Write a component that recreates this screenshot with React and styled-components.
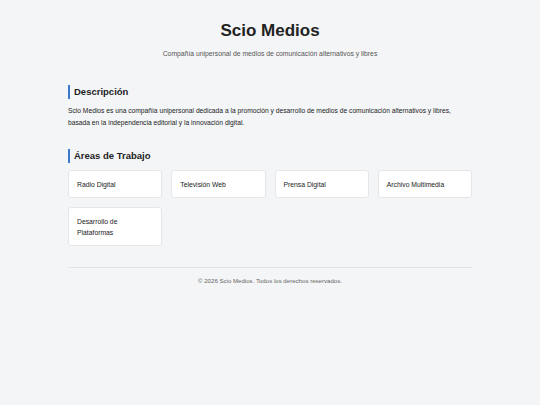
import React from "react";
import styled, { createGlobalStyle } from "styled-components";

const Global = createGlobalStyle`
  html, body { margin: 0; padding: 0; }
  body {
    background: #f4f5f7;
    font-family: "Liberation Sans", Arial, sans-serif;
    color: #222;
  }
`;

const Page = styled.div`
  max-width: 404px;
  margin: 0 auto;
  padding-top: 21px;
`;

const Header = styled.header`
  text-align: center;
`;

const Title = styled.h1`
  margin: 0;
  font-size: 17px;
  line-height: 20px;
  font-weight: 700;
  color: #222;
`;

const Subtitle = styled.p`
  margin: 7px 0 0;
  font-size: 6.8px;
  line-height: 11px;
  color: #555;
`;

const Section = styled.section`
  margin-top: ${(p) => p.$top}px;
`;

const Heading = styled.h2`
  margin: 0;
  font-size: 9.5px;
  line-height: 14px;
  font-weight: 700;
  color: #222;
  border-left: 2px solid #3a78c8;
  padding-left: 4px;
`;

const Paragraph = styled.p`
  margin: 6px 0 0;
  font-size: 6.7px;
  line-height: 12px;
  color: #222;
`;

const Grid = styled.div`
  margin-top: 7px;
  display: grid;
  grid-template-columns: repeat(4, 1fr);
  gap: 9px;
`;

const Card = styled.div`
  background: #fff;
  border: 1px solid #e4e6ea;
  border-radius: 3px;
  padding: 7.5px 8px;
  font-size: 6.8px;
  line-height: 11px;
  color: #222;
`;

const Footer = styled.footer`
  margin-top: 21px;
  border-top: 1px solid #e2e4e8;
  padding-top: 8px;
  text-align: center;
  font-size: 6.1px;
  line-height: 10px;
  color: #666;
`;

const areas = [
  "Radio Digital",
  "Televisión Web",
  "Prensa Digital",
  "Archivo Multimedia",
  "Desarrollo de Plataformas",
];

export default function App() {
  return (
    <>
      <Global />
      <Page>
        <Header>
          <Title>Scio Medios</Title>
          <Subtitle>
            Compañía unipersonal de medios de comunicación alternativos y libres
          </Subtitle>
        </Header>
        <Section $top={26}>
          <Heading>Descripción</Heading>
          <Paragraph>
            Scio Medios es una compañía unipersonal dedicada a la promoción y
            desarrollo de medios de comunicación alternativos y libres, basada en
            la independencia editorial y la innovación digital.
          </Paragraph>
        </Section>
        <Section $top={20}>
          <Heading>Áreas de Trabajo</Heading>
          <Grid>
            {areas.map((a) => (
              <Card key={a}>{a}</Card>
            ))}
          </Grid>
        </Section>
        <Footer>© 2026 Scio Medios. Todos los derechos reservados.</Footer>
      </Page>
    </>
  );
}
